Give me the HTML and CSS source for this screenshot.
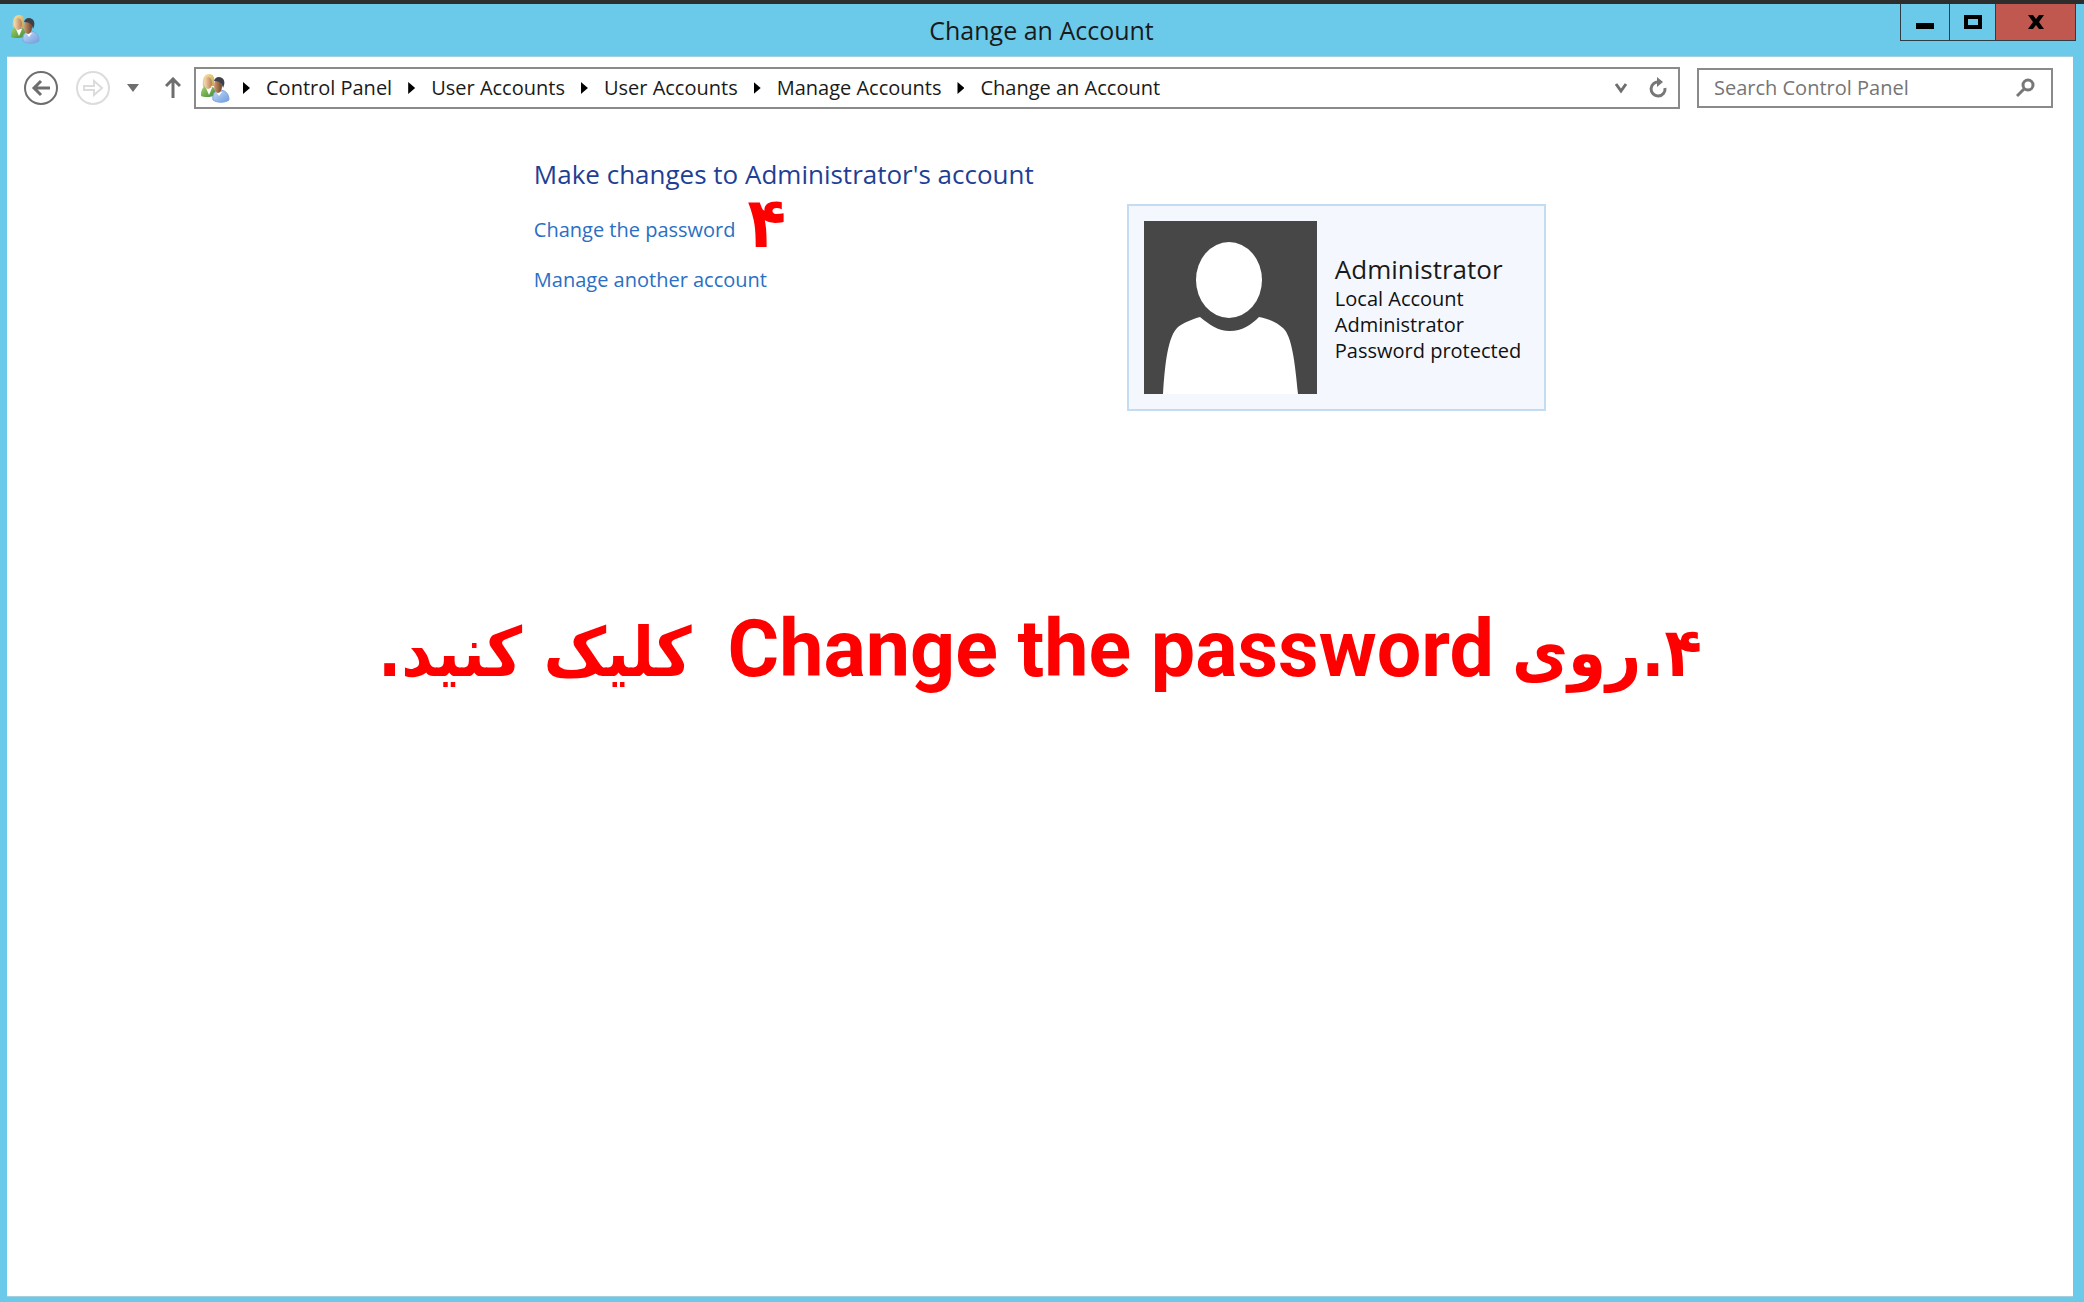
FILE: index.html
```html
<!DOCTYPE html>
<html lang="en">
<head>
<meta charset="utf-8">
<title>Change an Account</title>
<link rel="stylesheet" href="styles.css">
</head>
<body>
<svg class="sprite" aria-hidden="true">
  <defs>
    <linearGradient id="hair" x1="0" y1="0" x2="1" y2="1"><stop offset="0" stop-color="#f5e6a8"/><stop offset="1" stop-color="#c9a050"/></linearGradient>
    <linearGradient id="face" x1="0" y1="0" x2="1" y2="0"><stop offset="0" stop-color="#f9dcb8"/><stop offset="1" stop-color="#b87c50"/></linearGradient>
    <linearGradient id="face2" x1="0" y1="0" x2="1" y2="0"><stop offset="0" stop-color="#d09a70"/><stop offset="1" stop-color="#6e4329"/></linearGradient>
    <linearGradient id="green" x1="0" y1="0" x2="1" y2="1"><stop offset="0" stop-color="#a5d36c"/><stop offset="1" stop-color="#3f8a34"/></linearGradient>
    <linearGradient id="blue" x1="0" y1="0" x2="1" y2="1"><stop offset="0" stop-color="#c8defa"/><stop offset="1" stop-color="#6f9bdc"/></linearGradient>
    <symbol id="users" viewBox="0 0 30 30">
      <path d="M3 14C2 6 4 1 9 1s6 4 5 12z" fill="url(#hair)"/>
      <path d="M1 23c0-5 1-8 4-10l4 3 4-2c2 2 3 4 3 8-4 2-11 3-15 1z" fill="url(#green)"/>
      <path d="M6 15l3 7 3-7z" fill="#fff"/>
      <ellipse cx="8" cy="10" rx="4" ry="6" fill="url(#face)"/>
      <path d="M13 27c-1-6 2-9 6-10 6 0 10 3 10 10-4 3-12 3-16 0z" fill="url(#blue)" stroke="#7fa4dc"/>
      <path d="M16 19l3 4 3-4z" fill="#fff"/>
      <ellipse cx="18" cy="13" rx="4" ry="7" fill="url(#face2)"/>
      <path d="M14 8c1-4 5-5 8-3s3 6 1 10c-1-4-2-7-9-7z" fill="#3d3f49"/>
    </symbol>
  </defs>
</svg>
<div class="window">
  <header class="titlebar">
    <svg class="app-icon"><use href="#users"/></svg>
    <h1 class="title">Change an Account</h1>
    <div class="controls">
      <button class="control" aria-label="Minimize"><svg width="18" height="16"><path d="M0 9h18v6H0z"/></svg></button>
      <button class="control" aria-label="Maximize"><svg width="18" height="16"><path d="M2 3h14v10H2z" fill="none" stroke="#000" stroke-width="4"/></svg></button>
      <button class="control close" aria-label="Close"><svg width="18" height="16"><path d="M1 1h5l3 4 3-4h5l-5 7 5 7h-5l-3-4-3 4H1l5-7z"/></svg></button>
    </div>
  </header>
  <div class="client">
    <nav class="toolbar" aria-label="Navigation">
      <button class="nav back" aria-label="Back"><svg width="34" height="34" fill="none" stroke="#6e6e6e"><circle cx="17" cy="17" r="16" stroke-width="2"/><path d="M26 17H10m7-7l-7 7 7 7" stroke-width="3"/></svg></button>
      <button class="nav forward" aria-label="Forward"><svg width="34" height="34" fill="none" stroke="#dcdcdc"><circle cx="17" cy="17" r="16" stroke-width="2"/><path d="M8 15h10v-5l8 7-8 7v-5H8z" stroke-width="2"/></svg></button>
      <button class="nav recent" aria-label="Recent locations"><svg width="12" height="8"><path d="M0 0h12L6 8z" fill="#6e6e6e"/></svg></button>
      <button class="nav up" aria-label="Up"><svg width="16" height="22" fill="none" stroke="#6e6e6e" stroke-width="3"><path d="M8 21V3M1 9l7-7 7 7"/></svg></button>
      <div class="address">
        <svg class="place-icon"><use href="#users"/></svg>
        <ol class="crumbs">
          <li><a href="#">Control Panel</a></li>
          <li><a href="#">User Accounts</a></li>
          <li><a href="#">User Accounts</a></li>
          <li><a href="#">Manage Accounts</a></li>
          <li><a href="#">Change an Account</a></li>
        </ol>
        <button class="nav" aria-label="Previous locations"><svg width="14" height="12" fill="none" stroke="#6e6e6e" stroke-width="3"><path d="M2 2l5 7 5-7"/></svg></button>
        <button class="nav" aria-label="Refresh"><svg width="20" height="22" fill="none" stroke="#777" stroke-width="3"><path d="M17 11a7 7 0 1 1-6-6"/><path d="M9 0l6 5-6 5z" fill="#777" stroke="none"/></svg></button>
      </div>
      <label class="search">
        <input type="search" placeholder="Search Control Panel" aria-label="Search Control Panel">
        <svg width="20" height="20" fill="none" stroke="#777" stroke-width="3"><circle cx="12" cy="7" r="5"/><path d="M8 11l-7 7"/></svg>
      </label>
    </nav>
    <main class="content">
      <section class="tasks">
        <h2>Make changes to Administrator's account</h2>
        <p class="task"><a href="#">Change the password</a><span class="step" lang="fa">۴</span></p>
        <p class="task"><a href="#">Manage another account</a></p>
      </section>
      <section class="account">
        <svg class="avatar" viewBox="0 0 173 173"><path fill="#474747" d="M0 0h173v173H0z"/><ellipse cx="85" cy="59" rx="33" ry="38" fill="#fff"/><path fill="#fff" d="M19 173c2-31 5-58 15-67 5-4 15-8 22-10 10 8 18 14 30 14s21-6 29-14c11 2 18 6 24 11 9 8 12 35 15 66z"/></svg>
        <div>
          <h3>Administrator</h3>
          <p>Local Account</p>
          <p>Administrator</p>
          <p>Password protected</p>
        </div>
      </section>
    </main>
    <p class="instruction" lang="fa" dir="rtl"><span class="persian">۴.روی</span><span lang="en" dir="ltr">Change the password</span><span class="persian tail">کلیک کنید.</span></p>
  </div>
</div>
</body>
</html>
```
FILE: styles.css
```css
* { box-sizing: border-box; }
body {
  margin: 0;
  font: 20px/26px "Open Sans", "Noto Sans", sans-serif;
  color: #1a1a1a;
}
h1, h2, h3, p, ol { margin: 0; padding: 0; font-weight: 400; }
a { color: inherit; text-decoration: none; }
button { padding: 0; border: 0; background: none; font: inherit; }
svg { display: block; }
.sprite { position: absolute; width: 0; height: 0; }

.window {
  display: flex;
  flex-direction: column;
  min-height: 100vh;
  padding: 0 11px 5px 7px;
  border-top: 4px solid #2d2d2d;
  background: #6bcaea;
}
.titlebar {
  display: grid;
  grid-template-columns: 1fr auto 1fr;
  align-items: start;
  height: 52px;
  margin-right: -3px;
}
.app-icon { width: 30px; height: 30px; margin: 10px 0 0 3px; }
.title { font-size: 25px; line-height: 52px; }
.controls {
  display: flex;
  justify-self: end;
  height: 37px;
  border: solid #2e3d45;
  border-width: 0 1px 1px;
}
.control {
  display: grid;
  place-items: center;
  width: 48px;
}
.control + .control { width: 46px; border-left: 1px solid #2e3d45; }
.control.close { width: 80px; background: #c15850; }

.client { flex: 1; background: #fff; border: 1px solid #a5cfdf; border-width: 1px 0; }
.toolbar {
  display: flex;
  align-items: center;
  padding: 10px 20px 0 17px;
}
.nav { flex: none; }
.forward { margin-left: 18px; }
.recent { margin-left: 17px; }
.up { margin-left: 26px; }
.address {
  display: flex;
  flex: 1;
  align-items: center;
  gap: 20px;
  height: 42px;
  margin: 0 17px 0 13px;
  padding: 0 10px 0 4px;
  border: 2px solid #8a8a8a;
}
.place-icon { width: 30px; height: 30px; }
.crumbs { display: flex; flex: 1; margin-left: -7px; list-style: none; }
.crumbs li { display: flex; align-items: center; }
.crumbs li::before {
  content: "";
  width: 7px;
  height: 12px;
  margin-right: 16px;
  background: #000;
  clip-path: polygon(0 0, 100% 50%, 0 100%);
}
.crumbs li + li::before { margin-left: 16px; }
.search {
  display: flex;
  align-items: center;
  width: 356px;
  height: 40px;
  padding: 0 15px;
  border: 2px solid #8a8a8a;
}
.search input {
  flex: 1;
  min-width: 0;
  padding: 0;
  border: 0;
  outline: 0;
  background: none;
  font: inherit;
}
.search input::placeholder { color: #757575; opacity: 1; }

.content {
  display: grid;
  grid-template-columns: 593px 419px;
  align-items: start;
  margin-left: 25.5%;
  padding-top: 47px;
}
h2 { color: #1f3f94; font-size: 26px; line-height: 36px; }
.task { position: relative; width: max-content; color: #2a6fc4; line-height: 30px; }
h2 + .task { margin: 23px 0 20px; }
.step {
  position: absolute;
  left: 100%;
  bottom: -4px;
  margin-left: 12px;
  color: #f00;
  font: bold 70px/52px "DejaVu Sans Condensed", "DejaVu Sans", sans-serif;
}
.account {
  display: flex;
  align-items: center;
  gap: 18px;
  margin-top: 48px;
  padding: 15px;
  border: 2px solid #c3dcf2;
  background: #f4f8fe;
}
.avatar { flex: none; width: 173px; height: 173px; }
.account h3 { font-size: 26px; line-height: 34px; }
.account p { color: #111; white-space: nowrap; }

.instruction {
  display: flex;
  justify-content: center;
  align-items: baseline;
  gap: 18px;
  margin-top: 188px;
  color: #f00;
  font: bold 79px/100px Roboto, sans-serif;
}
.persian { font: bold 68px/100px "DejaVu Sans Condensed", "DejaVu Sans", sans-serif; }
.tail { margin-right: 18px; }
```
